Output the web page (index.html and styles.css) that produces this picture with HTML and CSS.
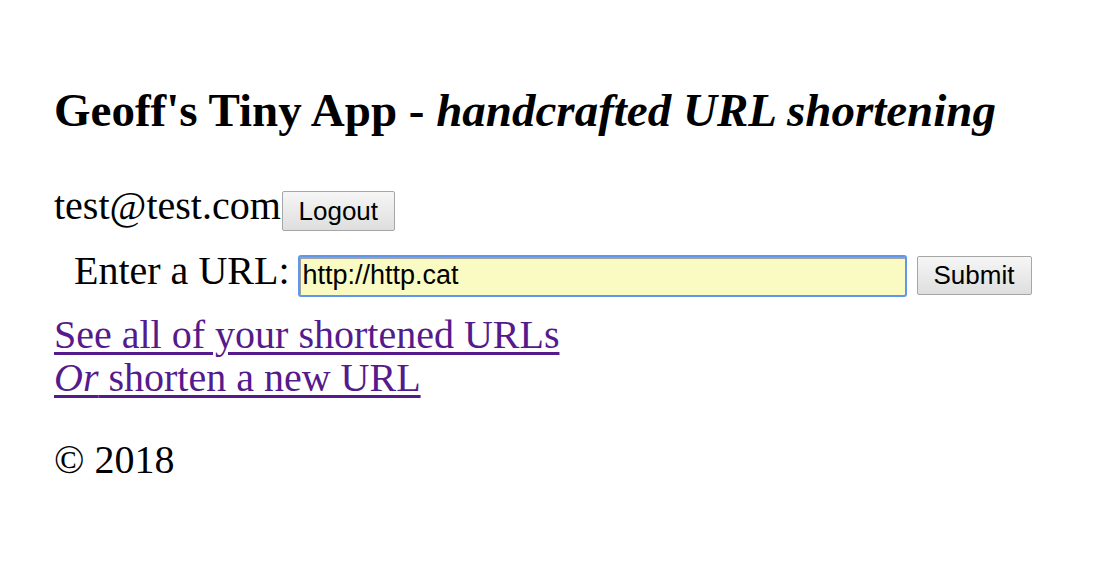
FILE: index.html
```html
<!DOCTYPE html>
<html>
<head>
<meta charset="utf-8">
<title>Geoff's Tiny App</title>
<link rel="stylesheet" href="styles.css">
</head>
<body>
<main class="page">
  <h1 class="title">Geoff's Tiny App - <em>handcrafted URL shortening</em></h1>
  <div class="user">test@test.com<button class="btn btn-logout">Logout</button></div>
  <form class="url-form">
    <label class="url-label" for="url">Enter a URL:</label>
    <input class="url-input" id="url" type="text" value="http://http.cat">
    <button class="btn btn-submit" type="button">Submit</button>
  </form>
  <nav class="links">
    <a class="link" href="#">See all of your shortened URLs</a>
    <a class="link" href="#"><em>Or</em> shorten a new URL</a>
  </nav>
  <footer class="footer">© 2018</footer>
</main>
</body>
</html>
```

FILE: styles.css
```css
html, body {
  margin: 0;
  padding: 0;
  background: #fff;
}
body {
  font-family: "Liberation Serif", "Times New Roman", serif;
  font-size: 40px;
  color: #000;
}
.page {
  padding: 83px 0 0 54px;
}
.title {
  font-size: 47px;
  font-weight: bold;
  margin: 0 0 47px 0;
  line-height: 54px;
}
.title em {
  font-style: italic;
}
.user {
  display: flex;
  align-items: flex-start;
  line-height: 44px;
}
.btn {
  box-sizing: border-box;
  font-family: "Liberation Sans", Arial, sans-serif;
  font-size: 26px;
  color: #000;
  background: linear-gradient(#f6f6f6, #dedede);
  border: 1px solid #a6a6a6;
  border-radius: 2px;
  padding: 0 10px;
  height: 40px;
}
.btn-logout {
  margin-left: 1px;
  margin-top: 7px;
  width: 113px;
}
.url-form {
  display: flex;
  align-items: baseline;
  margin-top: 18px;
  padding-left: 20px;
  line-height: 44px;
}
.url-label {
  margin-right: 8px;
}
.url-input {
  box-sizing: border-box;
  width: 609px;
  height: 42px;
  font-family: "Liberation Sans", Arial, sans-serif;
  font-size: 27px;
  color: #000;
  background: #fafac3;
  border: 2px solid #5e97f0;
  border-radius: 3px;
  box-shadow: inset 1px 2px 0 #a0a0a0;
  padding: 0 3px;
  outline: none;
}
.btn-submit {
  margin-left: 10px;
  width: 115px;
  height: 39px;
}
.links {
  display: flex;
  flex-direction: column;
  margin-top: 16px;
  line-height: 43px;
  align-items: flex-start;
}
.link {
  color: #551a8b;
  text-decoration: underline;
  text-decoration-thickness: 3px;
  text-underline-offset: 4px;
}
.footer {
  margin-top: 39px;
  line-height: 44px;
}
```
